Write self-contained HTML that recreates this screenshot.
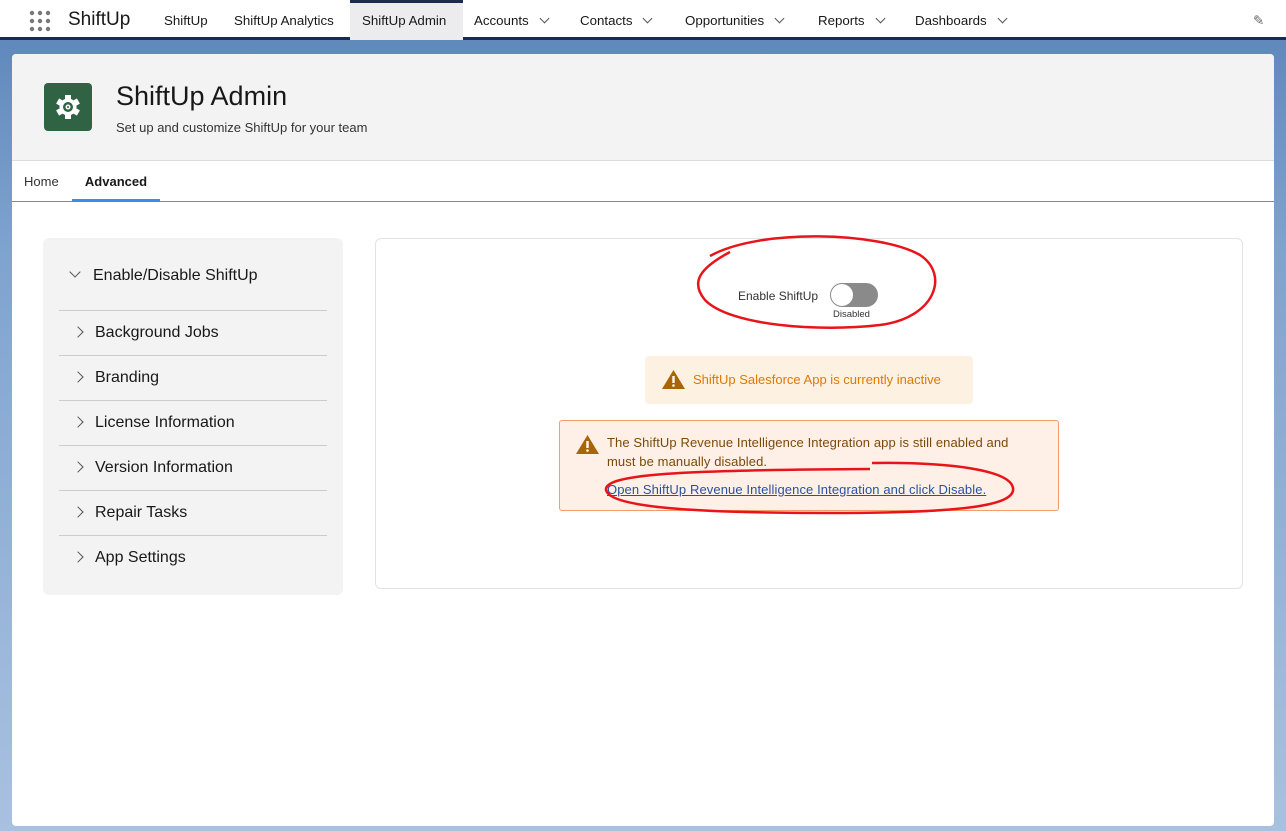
<!DOCTYPE html>
<html><head><style>
*{box-sizing:border-box;margin:0;padding:0}
body{width:1286px;height:831px;overflow:hidden;font-family:"Liberation Sans",sans-serif;background:linear-gradient(180deg,#5a84b8 0,#7fa3cf 30%,#a9c1e0 100%);position:relative;color:#181818}
.top{position:absolute;left:0;top:0;width:1286px;height:40px;background:#fff;border-bottom:3px solid #1b2a4e}
.top .t{position:absolute;top:13px;font-size:13.3px;color:#181818}
.sel{position:absolute;left:350px;top:0;width:113px;height:40px;background:#ececef;border-top:3px solid #1b2a4e}
.chev{display:inline-block;width:7px;height:7px;border-right:1.3px solid #555;border-bottom:1.3px solid #555;transform:rotate(45deg);margin-left:12px;position:relative;top:-3px}
.card{position:absolute;left:12px;top:54px;width:1262px;height:772px;background:#fff;border-radius:4px;overflow:hidden}
.hdr{height:107px;background:#f3f3f3;border-bottom:1px solid #ddd;position:relative}
.icon{position:absolute;left:32px;top:29px;width:48px;height:48px;background:#2f6343;border-radius:4px}
.tabs{height:41px;border-bottom:1px solid #888;position:relative}
.left{position:absolute;left:31px;top:184px;width:300px;height:357px;background:#f3f3f3;border-radius:6px}
.item{position:absolute;left:16px;width:268px;font-size:16px;color:#181818}
.item .c{display:inline-block;width:8px;height:8px;border-right:1.5px solid #555;border-bottom:1.5px solid #555;transform:rotate(-45deg);margin:0 13px 0 0;position:relative;top:-1px;left:0}
.line{position:absolute;left:16px;width:268px;border-top:1px solid #ccc}
.right{position:absolute;left:363px;top:184px;width:868px;height:351px;border:1px solid #e3e3e3;border-radius:6px}
</style></head><body>
<div class="top">
<svg style="position:absolute;left:29px;top:10px" width="22" height="22"><g fill="#777"><circle cx="3" cy="3" r="2.2"/><circle cx="11" cy="3" r="2.2"/><circle cx="19" cy="3" r="2.2"/><circle cx="3" cy="11" r="2.2"/><circle cx="11" cy="11" r="2.2"/><circle cx="19" cy="11" r="2.2"/><circle cx="3" cy="19" r="2.2"/><circle cx="11" cy="19" r="2.2"/><circle cx="19" cy="19" r="2.2"/></g></svg>
<div class="t" style="left:68px;top:9px;font-size:19px">ShiftUp</div>
<div class="sel"></div>
<div class="t" style="left:164px">ShiftUp</div>
<div class="t" style="left:234px">ShiftUp Analytics</div>
<div class="t" style="left:362px">ShiftUp Admin</div>
<div class="t" style="left:474px">Accounts<span class="chev"></span></div>
<div class="t" style="left:580px">Contacts<span class="chev"></span></div>
<div class="t" style="left:685px">Opportunities<span class="chev"></span></div>
<div class="t" style="left:818px">Reports<span class="chev"></span></div>
<div class="t" style="left:915px">Dashboards<span class="chev"></span></div>
<div class="t" style="left:1253px;color:#666">✎</div>
</div>
<div class="card">
<div class="hdr">
<div class="icon"><svg width="48" height="48" viewBox="0 0 48 48"><g transform="translate(24,24)" fill="#fff"><circle r="8.5"/><g><rect x="-3" y="-12" width="6" height="6"/><rect x="-3" y="6" width="6" height="6"/><rect x="-3" y="-12" width="6" height="6" transform="rotate(60)"/><rect x="-3" y="6" width="6" height="6" transform="rotate(60)"/><rect x="-3" y="-12" width="6" height="6" transform="rotate(120)"/><rect x="-3" y="6" width="6" height="6" transform="rotate(120)"/></g><circle r="5" fill="#2f6343"/><circle r="2.5" fill="#fff"/><circle r="1" fill="#2f6343"/></g></svg></div>
<div style="position:absolute;left:104px;top:27px;font-size:27px">ShiftUp Admin</div>
<div style="position:absolute;left:104px;top:66px;font-size:13px;color:#333">Set up and customize ShiftUp for your team</div>
</div>
<div class="tabs">
<div style="position:absolute;left:12px;top:13px;font-size:13px;color:#333">Home</div>
<div style="position:absolute;left:60px;top:13px;width:88px;text-align:center;font-size:13px;font-weight:bold">Advanced</div>
<div style="position:absolute;left:60px;bottom:-1px;width:88px;height:3px;background:#3b8de6"></div>
</div>
<div class="left">
<div class="item" style="top:29px;left:28px"><span class="c" style="transform:rotate(45deg);top:-4px;margin-right:14px"></span>Enable/Disable ShiftUp</div>
<div class="line" style="top:72px"></div>
<div class="item" style="top:86px;left:31px"><span class="c"></span>Background Jobs</div>
<div class="line" style="top:117px"></div>
<div class="item" style="top:131px;left:31px"><span class="c"></span>Branding</div>
<div class="line" style="top:162px"></div>
<div class="item" style="top:176px;left:31px"><span class="c"></span>License Information</div>
<div class="line" style="top:207px"></div>
<div class="item" style="top:221px;left:31px"><span class="c"></span>Version Information</div>
<div class="line" style="top:252px"></div>
<div class="item" style="top:266px;left:31px"><span class="c"></span>Repair Tasks</div>
<div class="line" style="top:297px"></div>
<div class="item" style="top:311px;left:31px"><span class="c"></span>App Settings</div>
</div>
<div class="right">
<div style="position:absolute;left:362px;top:50px;font-size:12px;color:#333">Enable ShiftUp</div>
<div style="position:absolute;left:454px;top:44px;width:48px;height:24px;border-radius:12px;background:#8a8a8a"></div>
<div style="position:absolute;left:455px;top:45px;width:22px;height:22px;border-radius:11px;background:#fff"></div>
<div style="position:absolute;left:457px;top:70px;font-size:9.5px;color:#333">Disabled</div>
<div style="position:absolute;left:269px;top:117px;width:328px;height:48px;background:#fdf1e2;border-radius:4px"></div>
<svg style="position:absolute;left:285px;top:130px" width="25" height="21"><path d="M12.5 1 L24 20 L1 20Z" fill="#a96404"/><rect x="11.3" y="7" width="2.4" height="7" fill="#fff"/><circle cx="12.5" cy="16.5" r="1.3" fill="#fff"/></svg>
<div style="position:absolute;left:317px;top:133px;font-size:13px;color:#dd7a01">ShiftUp Salesforce App is currently inactive</div>
<div style="position:absolute;left:183px;top:181px;width:500px;height:91px;background:#fef0e6;border:1px solid #f29d6b;border-radius:3px"></div>
<svg style="position:absolute;left:199px;top:195px" width="25" height="21"><path d="M12.5 1 L24 20 L1 20Z" fill="#a96404"/><rect x="11.3" y="7" width="2.4" height="7" fill="#fff"/><circle cx="12.5" cy="16.5" r="1.3" fill="#fff"/></svg>
<div style="position:absolute;left:231px;top:194px;font-size:13px;line-height:19px;color:#7a4a0b;letter-spacing:0.1px">The ShiftUp Revenue Intelligence Integration app is still enabled and<br>must be manually disabled.</div>
<div style="position:absolute;left:231px;top:243px;font-size:13px;color:#2b4fa3;text-decoration:underline;letter-spacing:0.1px">Open ShiftUp Revenue Intelligence Integration and click Disable.</div>
</div>
</div>
<svg style="position:absolute;left:0;top:0" width="1286" height="831" fill="none" stroke="#e8141a" stroke-width="2.5">
<path d="M710 256 C760 228 880 232 920 255 C950 275 935 318 880 325 C820 332 730 326 705 300 C690 282 700 268 730 252"/>
<path d="M872 463 C950 462 1010 470 1013 488 C1016 506 960 513 830 513 C700 513 610 508 606 490 C604 474 680 470 870 469"/>
</svg>
</body></html>
